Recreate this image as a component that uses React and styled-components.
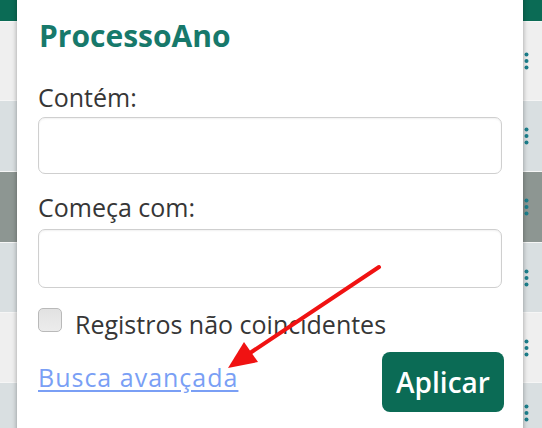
import styled, { createGlobalStyle } from "styled-components";

const GlobalStyle = createGlobalStyle`
  html, body {
    margin: 0;
    padding: 0;
    background: #ffffff;
    overflow: hidden;
  }
  body {
    font-family: "Open Sans", "Noto Sans", sans-serif;
  }
`;

const rows = [
  { h: 79, tone: "light" },
  { h: 71, tone: "blue" },
  { h: 71, tone: "dark" },
  { h: 70, tone: "blue" },
  { h: 70, tone: "light" },
  { h: 60, tone: "blue" },
];

const tones = {
  light: "#efefef",
  blue: "#d9dfe1",
  dark: "#8d9692",
};

const Dots = () => (
  <svg width="5" height="18" viewBox="0 0 5 18">
    <circle cx="2.5" cy="2.5" r="2" fill="#1b7f8c" />
    <circle cx="2.5" cy="9" r="2" fill="#1b7f8c" />
    <circle cx="2.5" cy="15.5" r="2" fill="#1b7f8c" />
  </svg>
);

const App = () => {
  return (
    <>
      <GlobalStyle />
      <Page>
        <Grid>
          <HeaderRow />
          {rows.map((r, i) => (
            <Row key={i} tone={r.tone} style={{ height: r.h }}>
              <Dots />
            </Row>
          ))}
        </Grid>

        <Popup>
          <Title>ProcessoAno</Title>
          <Field>
            <Label>Contém:</Label>
            <Input type="text" />
          </Field>
          <Field>
            <Label>Começa com:</Label>
            <Input type="text" tall />
          </Field>
          <CheckRow>
            <Box type="checkbox" />
            <CheckText>Registros não coincidentes</CheckText>
          </CheckRow>
          <Footer>
            <Link href="#">Busca avançada</Link>
            <Apply>Aplicar</Apply>
          </Footer>
        </Popup>

        <Arrow width="542" height="428" viewBox="0 0 542 428">
          <line
            x1="379"
            y1="267"
            x2="250"
            y2="353"
            stroke="#f01212"
            strokeWidth="4"
            strokeLinecap="round"
          />
          <polygon points="228,368 258,362 244,342" fill="#f01212" />
        </Arrow>
      </Page>
    </>
  );
};

const Page = styled.div`
  position: relative;
  width: 542px;
  height: 428px;
  overflow: hidden;
`;

const Grid = styled.div`
  display: flex;
  flex-direction: column;
`;

const HeaderRow = styled.div`
  height: 21px;
  background: #0b6b55;
`;

const Row = styled.div`
  display: flex;
  justify-content: flex-end;
  align-items: center;
  padding-right: 13px;
  box-sizing: border-box;
  background: ${({ tone }) => tones[tone]};
  border-top: 1px solid #f6f6f6;
`;

const Popup = styled.div`
  position: absolute;
  left: 17px;
  top: -10px;
  bottom: -10px;
  width: 506px;
  box-sizing: border-box;
  padding: 28px 19px 0 21px;
  background: #ffffff;
  box-shadow: 0 0 5px rgba(0, 0, 0, 0.35);
  display: flex;
  flex-direction: column;
`;

const Title = styled.div`
  font-size: 30px;
  line-height: 36px;
  font-weight: 700;
  color: #17796b;
  margin-bottom: 28px;
  padding-left: 1px;
`;

const Field = styled.div`
  display: flex;
  flex-direction: column;
  gap: 5px;
  margin-bottom: 18px;
  padding-right: 2px;

  & + & {
    gap: 7px;
    margin-bottom: 20px;
  }
`;

const Label = styled.label`
  font-size: 25px;
  line-height: 30px;
  color: #363636;
`;

const Input = styled.input`
  height: ${({ tall }) => (tall ? "59px" : "57px")};
  box-sizing: border-box;
  border: 1px solid #cfcfcf;
  border-radius: 7px;
  background: #ffffff;
  box-shadow: inset 0 1px 2px rgba(0, 0, 0, 0.06);
  outline: none;
  padding: 0 12px;
  font-size: 22px;
`;

const CheckRow = styled.div`
  display: flex;
  align-items: flex-start;
  gap: 13px;
`;

const Box = styled.input`
  appearance: none;
  margin: 0;
  width: 24px;
  height: 24px;
  border: 1px solid #b9b9b9;
  border-radius: 5px;
  background: linear-gradient(#e2e2e2, #ececec);
`;

const CheckText = styled.span`
  font-size: 25px;
  line-height: 30px;
  color: #363636;
  margin-top: 1px;
`;

const Footer = styled.div`
  display: flex;
  justify-content: space-between;
  align-items: center;
  margin-top: 13px;
`;

const Link = styled.a`
  font-size: 25px;
  line-height: 30px;
  letter-spacing: 1px;
  color: #7a9ff5;
  text-decoration: underline;
  text-underline-offset: 3px;
  margin-bottom: 10px;
`;

const Apply = styled.button`
  width: 122px;
  height: 60px;
  border: none;
  border-radius: 8px;
  background: #0b6b55;
  color: #ffffff;
  font-family: "Open Sans", "Noto Sans", sans-serif;
  font-size: 28px;
  font-weight: 600;
  padding: 0;
`;

const Arrow = styled.svg`
  position: absolute;
  left: 0;
  top: 0;
  pointer-events: none;
`;

export default App;
